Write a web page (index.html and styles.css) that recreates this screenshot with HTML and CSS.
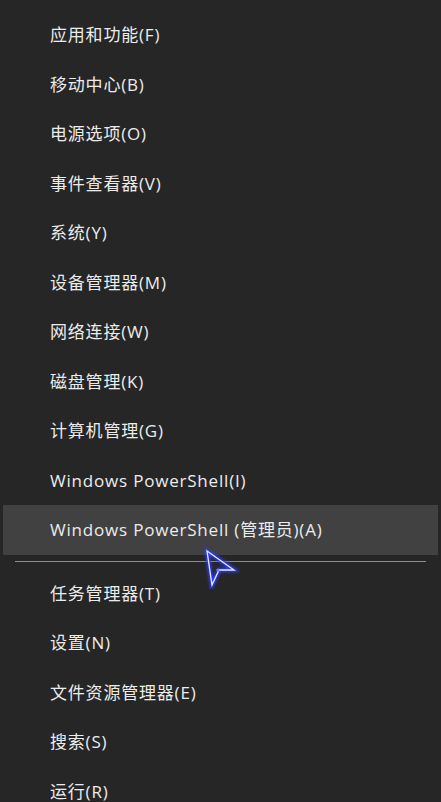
FILE: index.html
```html
<!DOCTYPE html>
<html>

<head>
	<meta charset="utf-8">
	<link rel="stylesheet" href="styles.css">
</head>

<body>
	<div class="menu">
		<div class="item">应用和功能(F)</div>
		<div class="item">移动中心(B)</div>
		<div class="item">电源选项(O)</div>
		<div class="item">事件查看器(V)</div>
		<div class="item">系统(Y)</div>
		<div class="item">设备管理器(M)</div>
		<div class="item">网络连接(W)</div>
		<div class="item">磁盘管理(K)</div>
		<div class="item">计算机管理(G)</div>
		<div class="item">Windows PowerShell(I)</div>
		<div class="item hover">Windows PowerShell (管理员)(A)</div>
		<div class="separator"></div>
		<div class="item">任务管理器(T)</div>
		<div class="item">设置(N)</div>
		<div class="item">文件资源管理器(E)</div>
		<div class="item">搜索(S)</div>
		<div class="item">运行(R)</div>
	</div>
	<svg class="cursor" width="40" height="44" viewBox="0 0 40 44">
		<defs>
			<filter id="glow" x="-50%" y="-50%" width="200%" height="200%">
				<feGaussianBlur stdDeviation="1.4" />
			</filter>
		</defs>
		<polygon points="7,6 34,25 19,25 12,40" fill="none" stroke="#2a3cff" stroke-width="4" filter="url(#glow)" />
		<polygon points="7,6 34,25 19,25 12,40" fill="none" stroke="#e8eaff" stroke-width="1.3" />
		<circle cx="18" cy="25" r="1.6" fill="#6f7cff" />
	</svg>
</body>

</html>
```

FILE: styles.css
```css
html,
body {
	margin: 0;
	padding: 0;
	background-color: #262626;
}

body {
	width: 441px;
	height: 802px;
	overflow: hidden;
	position: relative;
	font-family: "Open Sans", "Noto Sans CJK SC", sans-serif;
	font-size: 17px;
	letter-spacing: 0.8px;
	color: #ececec;
}

.menu {
	display: flex;
	flex-direction: column;
	padding: 10px 3px 0 3px;
}

.item {
	height: 49.5px;
	line-height: 49.5px;
	padding-left: 47px;
	white-space: nowrap;
}

.hover {
	background-color: #414141;
}

.separator {
	height: 14px;
	display: flex;
	align-items: center;
	padding: 0 12px;
}

.separator::before {
	content: "";
	flex: 1;
	height: 1px;
	background-color: #8c8c8c;
}

.cursor {
	position: absolute;
	left: 200px;
	top: 545px;
}
```
